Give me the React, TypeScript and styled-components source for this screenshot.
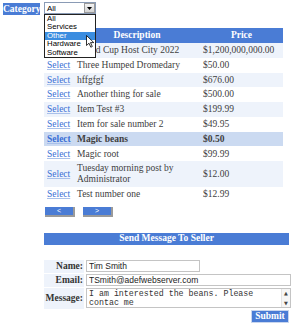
import React from "react";
import styled, { createGlobalStyle } from "styled-components";

const Global = createGlobalStyle`
  html, body { margin: 0; padding: 0; background: #fff; }
  body { font-family: "Liberation Serif", "Times New Roman", serif; }
`;

const BLUE = "#4a7cd5";

const Page = styled.div`
  width: 299px;
  height: 327px;
  position: relative;
  overflow: hidden;
`;

const TopBar = styled.div`
  display: flex;
  align-items: flex-start;
  gap: 4px;
  padding: 2px 0 0 3px;
`;

const CategoryLabel = styled.div`
  margin-top: 1px;
  width: 37px;
  height: 12px;
  line-height: 12px;
  background: ${BLUE};
  color: #fff;
  font-weight: bold;
  font-size: 9.5px;
  text-align: center;
`;

const SelectWrap = styled.div`
  position: relative;
  width: 52px;
`;

const SelectBox = styled.div`
  box-sizing: border-box;
  height: 12px;
  border: 1px solid #8a9bb5;
  background: #fff;
  display: flex;
  align-items: center;
  justify-content: space-between;
  padding-left: 2px;
  font-family: "Liberation Sans", Arial, sans-serif;
  font-size: 8px;
  color: #000;
`;

const ArrowBtn = styled.div`
  box-sizing: border-box;
  width: 11px;
  height: 10px;
  background: linear-gradient(#f4f4f4, #d4d4d4);
  border: 1px solid #9a9a9a;
  display: flex;
  align-items: center;
  justify-content: center;
`;

const DropList = styled.ul`
  position: absolute;
  left: 0;
  top: 12px;
  box-sizing: border-box;
  width: 52px;
  margin: 0;
  padding: 0;
  list-style: none;
  background: #fff;
  border: 1px solid #222;
  z-index: 5;
  font-family: "Liberation Sans", Arial, sans-serif;
  font-size: 7.8px;
`;

const DropItem = styled.li<{ $active?: boolean }>`
  height: 8.4px;
  line-height: 8.4px;
  padding-left: 2px;
  overflow: hidden;
  color: ${(p) => (p.$active ? "#fff" : "#000")};
  background: ${(p) => (p.$active ? "#3b8de0" : "transparent")};
`;

const Cursor = styled.svg`
  position: absolute;
  left: 42px;
  top: 33px;
  z-index: 6;
`;

const Content = styled.div`
  margin: 13px 0 0 44px;
`;

const Grid = styled.table`
  width: 239px;
  border-collapse: collapse;
  table-layout: fixed;
  font-size: 9.5px;
  line-height: 10.5px;
  color: #404040;
`;

const HeadCell = styled.th`
  background: ${BLUE};
  color: #fff;
  font-weight: bold;
  text-align: center;
  height: 15px;
  padding: 0;
`;

const Row = styled.tr<{ $tone: "white" | "light" | "sel" }>`
  background: ${(p) =>
    p.$tone === "light" ? "#eef3fb" : p.$tone === "sel" ? "#cbdaf1" : "#fff"};
  font-weight: ${(p) => (p.$tone === "sel" ? "bold" : "normal")};
`;

const Cell = styled.td`
  padding: 2.15px 2px 2.15px 3px;
  vertical-align: middle;
  text-align: left;
`;

const SelectLink = styled.a`
  color: #3a6fd6;
  text-decoration: underline;
  text-decoration-color: #a9c0ea;
  cursor: pointer;
`;

const Pager = styled.div`
  display: flex;
  gap: 8px;
  margin: 6px 0 0 1px;
`;

const PageBtn = styled.button`
  box-sizing: border-box;
  width: 30px;
  height: 10px;
  padding: 0;
  border: none;
  border-right: 2px solid #9a9a9a;
  border-bottom: 2px solid #9a9a9a;
  background: ${BLUE};
  color: #fff;
  font-family: "Liberation Sans", Arial, sans-serif;
  font-size: 7px;
  line-height: 8px;
`;

const SendBar = styled.div`
  margin-top: 16px;
  width: 245px;
  height: 11.5px;
  line-height: 11.5px;
  background: ${BLUE};
  color: #fff;
  font-weight: bold;
  font-size: 9.5px;
  text-align: center;
`;

const FormTable = styled.table`
  margin-top: 14px;
  width: 247px;
  border-collapse: separate;
  border-spacing: 0 1px;
  font-size: 9.5px;
`;

const LabelCell = styled.td<{ $h: number }>`
  width: 40px;
  height: ${(p) => p.$h}px;
  padding: 0 1px 0 0;
  background: #eef3fb;
  text-align: right;
  font-weight: bold;
  color: #333;
  white-space: nowrap;
  vertical-align: middle;
`;

const FieldCell = styled.td`
  padding: 0 0 0 2px;
  vertical-align: middle;
`;

const TextInput = styled.input<{ $w: number }>`
  box-sizing: border-box;
  display: block;
  width: ${(p) => p.$w}px;
  height: 12px;
  margin: 0;
  padding: 0 2px;
  border: 1px solid #c4c4c4;
  font-family: "Liberation Sans", Arial, sans-serif;
  font-size: 8.5px;
  color: #222;
  outline: none;
`;

const AreaBox = styled.div`
  box-sizing: border-box;
  width: 205px;
  height: 20px;
  border: 1px solid #c4c4c4;
  display: flex;
`;

const AreaText = styled.div`
  flex: 1;
  padding: 1px 2px;
  font-family: "Liberation Mono", "Courier New", monospace;
  font-size: 8.3px;
  line-height: 8.5px;
  color: #333;
  overflow: hidden;
`;

const ScrollBar = styled.div`
  width: 8px;
  display: flex;
  flex-direction: column;
  justify-content: space-between;
  align-items: center;
  background: #f6f6f6;
  border-left: 1px solid #e4e4e4;
  font-size: 5px;
  color: #444;
  font-family: "DejaVu Sans", sans-serif;
  line-height: 8px;
`;

const SubmitRow = styled.div`
  width: 245px;
  display: flex;
  justify-content: flex-end;
`;

const SubmitBtn = styled.button`
  box-sizing: border-box;
  width: 38px;
  height: 13px;
  padding: 0;
  border: 1px solid #c9d6ee;
  background: ${BLUE};
  color: #fff;
  font-family: "Liberation Serif", serif;
  font-weight: bold;
  font-size: 9.5px;
  line-height: 11px;
`;

type Item = { d: React.ReactNode; p: string; tone: "white" | "light" | "sel" };

const items: Item[] = [
  { d: "World Cup Host City 2022", p: "$1,200,000,000.00", tone: "light" },
  { d: "Three Humped Dromedary", p: "$50.00", tone: "white" },
  { d: "hffgfgf", p: "$676.00", tone: "light" },
  { d: "Another thing for sale", p: "$500.00", tone: "white" },
  { d: "Item Test #3", p: "$199.99", tone: "light" },
  { d: "Item for sale number 2", p: "$49.95", tone: "white" },
  { d: "Magic beans", p: "$0.50", tone: "sel" },
  { d: "Magic root", p: "$99.99", tone: "white" },
  { d: "Tuesday morning post by Administrator", p: "$12.00", tone: "light" },
  { d: "Test number one", p: "$12.99", tone: "white" },
];

export default function App() {
  return (
    <Page>
      <Global />
      <TopBar>
        <CategoryLabel>Category</CategoryLabel>
        <SelectWrap>
          <SelectBox>
            <span>All</span>
            <ArrowBtn>
              <svg width="5" height="3" viewBox="0 0 5 3">
                <path d="M0 0H5L2.5 3Z" fill="#000" />
              </svg>
            </ArrowBtn>
          </SelectBox>
          <DropList>
            <DropItem>All</DropItem>
            <DropItem>Services</DropItem>
            <DropItem $active>Other</DropItem>
            <DropItem>Hardware</DropItem>
            <DropItem>Software</DropItem>
          </DropList>
          <Cursor width="9" height="13" viewBox="0 0 9 13">
            <path
              d="M0.5 0.5V10.5L3 8.2L4.8 12.2L6.3 11.5L4.5 7.6H7.8Z"
              fill="#fff"
              stroke="#000"
              strokeWidth="0.8"
              strokeLinejoin="round"
            />
          </Cursor>
        </SelectWrap>
      </TopBar>
      <Content>
        <Grid>
          <colgroup>
            <col style={{ width: 30 }} />
            <col style={{ width: 126 }} />
            <col style={{ width: 83 }} />
          </colgroup>
          <thead>
            <tr>
              <HeadCell />
              <HeadCell>Description</HeadCell>
              <HeadCell>Price</HeadCell>
            </tr>
          </thead>
          <tbody>
            {items.map((it, i) => (
              <Row key={i} $tone={it.tone}>
                <Cell>
                  <SelectLink>Select</SelectLink>
                </Cell>
                <Cell>{it.d}</Cell>
                <Cell>{it.p}</Cell>
              </Row>
            ))}
          </tbody>
        </Grid>
        <Pager>
          <PageBtn>&lt;</PageBtn>
          <PageBtn>&gt;</PageBtn>
        </Pager>
        <SendBar>Send Message To Seller</SendBar>
        <FormTable>
          <tbody>
            <tr>
              <LabelCell $h={13}>Name:</LabelCell>
              <FieldCell>
                <TextInput $w={114} defaultValue="Tim Smith" />
              </FieldCell>
            </tr>
            <tr>
              <LabelCell $h={13}>Email:</LabelCell>
              <FieldCell>
                <TextInput $w={205} defaultValue="TSmith@adefwebserver.com" />
              </FieldCell>
            </tr>
            <tr>
              <LabelCell $h={21}>Message:</LabelCell>
              <FieldCell>
                <AreaBox>
                  <AreaText>
                    I am interested the beans. Please
                    <br />
                    contac me
                  </AreaText>
                  <ScrollBar>
                    <span>▲</span>
                    <span>▼</span>
                  </ScrollBar>
                </AreaBox>
              </FieldCell>
            </tr>
          </tbody>
        </FormTable>
        <SubmitRow>
          <SubmitBtn>Submit</SubmitBtn>
        </SubmitRow>
      </Content>
    </Page>
  );
}
